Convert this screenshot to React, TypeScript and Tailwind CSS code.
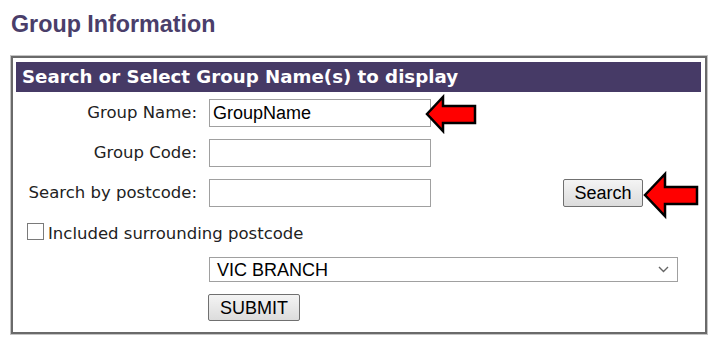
import React from "react";

const verdana = { fontFamily: '"DejaVu Sans", Verdana, sans-serif' };
const arial = { fontFamily: '"Liberation Sans", Arial, sans-serif' };

function Arrow({ className, w, h, tipY, headX, bodyTop, bodyBot, right, headTop, headBot }: any) {
  return (
    <svg className={className} width={w} height={h} viewBox={`0 0 ${w} ${h}`}>
      <polygon
        points={`3,${tipY} ${headX},${headTop} ${headX},${bodyTop} ${right},${bodyTop} ${right},${bodyBot} ${headX},${bodyBot} ${headX},${headBot}`}
        fill="#ff0000"
        stroke="#000"
        strokeWidth="2.5"
        strokeLinejoin="miter"
      />
    </svg>
  );
}

export default function App() {
  return (
    <div className="relative w-[717px] h-[345px] bg-white overflow-hidden">
      <h1
        className="pl-[11px] pt-[13px] text-[23.3px] leading-[23px] font-bold text-[#4a3e6a]"
        style={arial}
      >
        Group Information
      </h1>
      <div className="ml-[11px] mt-[20px] w-[696px] h-[278px] border-2 border-[#6a6a6a] shadow-[0_0_0_1px_#c4c4c4] pt-[4px] pl-[3px] pr-[4px]">
        <div
          className="h-[30px] bg-[#463a66] text-white font-bold text-[18.2px] leading-[30px] pl-[6px] flex items-center"
          style={verdana}
        >
          Search or Select Group Name(s) to display
        </div>
        <div className="text-[16.5px] leading-[20px] text-[#222]" style={verdana}>
          <div className="flex items-center h-[28px] mt-[7px]">
            <div className="w-[181px] text-right">Group Name:</div>
            <div
              className="ml-[12px] w-[222px] h-[28px] border border-[#a0a0a0] pl-[3px] flex items-center text-[18px] text-black"
              style={arial}
            >
              GroupName
            </div>
          </div>
          <div className="flex items-center h-[28px] mt-[12px]">
            <div className="w-[181px] text-right">Group Code:</div>
            <div className="ml-[12px] w-[222px] h-[28px] border border-[#a0a0a0]" />
          </div>
          <div className="flex items-center h-[28px] mt-[12px]">
            <div className="w-[181px] text-right">Search by postcode:</div>
            <div className="ml-[12px] w-[222px] h-[28px] border border-[#a0a0a0]" />
            <div
              className="ml-[132px] w-[80px] h-[28px] border border-[#707070] rounded-[2px] bg-gradient-to-b from-[#f4f4f4] to-[#dcdcdc] flex items-center justify-center text-[18px] text-black"
              style={arial}
            >
              Search
            </div>
          </div>
          <div className="flex items-center h-[17px] mt-[16px] ml-[11px]">
            <div className="w-[17px] h-[17px] border border-[#7a7a7a] bg-white" />
            <div className="ml-[4px] pt-[4px]">Included surrounding postcode</div>
          </div>
          <div
            className="ml-[193px] mt-[17px] w-[469px] h-[25px] border border-[#a0a0a0] pl-[7px] pr-[8px] flex items-center justify-between text-[18px] text-black"
            style={arial}
          >
            <span>VIC BRANCH</span>
            <svg width="11" height="7" viewBox="0 0 11 7">
              <polyline points="1,1 5.5,5.5 10,1" fill="none" stroke="#666" strokeWidth="1.4" />
            </svg>
          </div>
          <div
            className="ml-[192px] mt-[12px] w-[92px] h-[27px] border border-[#707070] rounded-[2px] bg-gradient-to-b from-[#f4f4f4] to-[#dcdcdc] flex items-center justify-center text-[18px] text-black"
            style={arial}
          >
            SUBMIT
          </div>
        </div>
      </div>
      <Arrow
        className="absolute left-[424px] top-[94px]"
        w={56}
        h={42}
        tipY={20}
        headX={19}
        headTop={3}
        headBot={37}
        bodyTop={12}
        bodyBot={29}
        right={51}
      />
      <Arrow
        className="absolute left-[642px] top-[171px]"
        w={58}
        h={50}
        tipY={24}
        headX={23}
        headTop={3}
        headBot={45}
        bodyTop={16}
        bodyBot={33}
        right={55}
      />
    </div>
  );
}
